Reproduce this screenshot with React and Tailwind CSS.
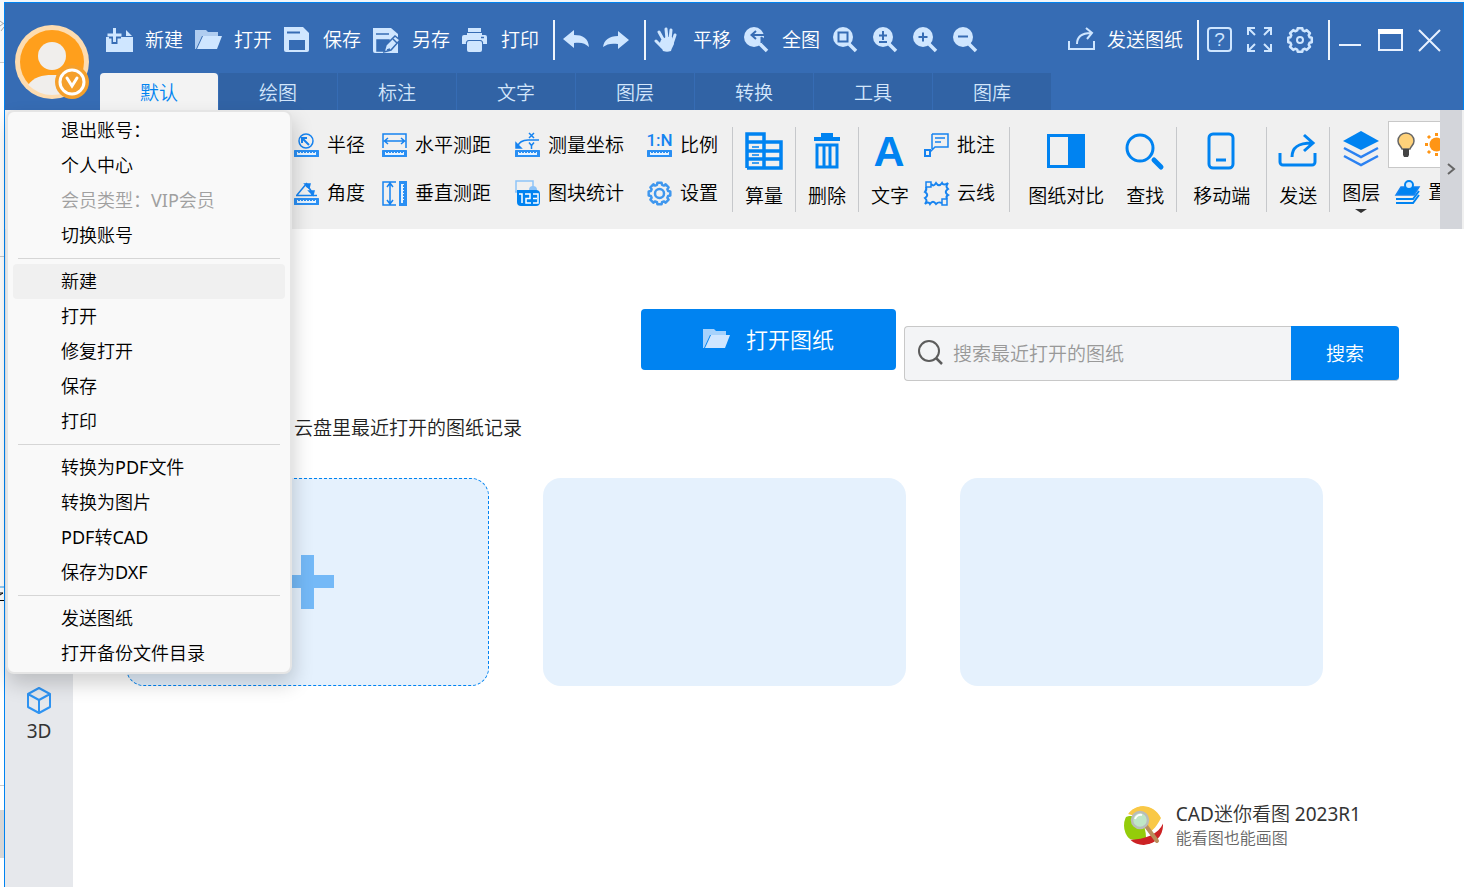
import React, { useState } from 'react';

const gearPath = (c, outer, inner, teeth) => {
  const step = (Math.PI * 2) / teeth;
  const points = [];
  for (let i = 0; i < teeth; i++) {
    const a = i * step - Math.PI / 2;
    [[-0.24, outer], [0.24, outer], [0.36, inner], [0.64, inner]].forEach(([k, r]) => {
      points.push(`${(c + r * Math.cos(a + k * step)).toFixed(2)} ${(c + r * Math.sin(a + k * step)).toFixed(2)}`);
    });
  }
  return `M${points.join('L')}Z`;
};

/* ---------- title bar icons, 27px box ---------- */

const BAR = '#366cb4';
const PALE = '#cfe6ff';

function BarIcon({ children }) {
  return (
    <svg width="27" height="27" viewBox="0 0 27 27" fill="none" className="shrink-0" aria-hidden="true">
      {children}
    </svg>
  );
}

const NewIcon = () => (
  <BarIcon>
    <path d="M0 10h27v15H0z" fill={PALE} />
    <path d="M20 3v6h6z" fill={PALE} />
    <path d="M8.500 3v14M3 8.500h12" stroke={BAR} strokeWidth="6" />
    <path d="M8.500 1v14M1.500 8h14" stroke={PALE} strokeWidth="3" />
  </BarIcon>
);

const FolderIcon = () => (
  <BarIcon>
    <path d="M0 3h11l2 2h10v4H7L1 22H0z" fill={PALE} opacity="0.8" />
    <path d="M8 9h19l-5 13H2z" fill={PALE} />
  </BarIcon>
);

const SaveIcon = () => (
  <BarIcon>
    <path d="M1 0h18l6 6v17a2 2 0 0 1-2 2H2a2 2 0 0 1-2-2V0z" fill={PALE} />
    <path d="M3 5.500h13" stroke={BAR} strokeWidth="2" />
    <path d="M5 13h16v10H5z" fill={BAR} />
  </BarIcon>
);

const SaveAsIcon = () => (
  <BarIcon>
    <path d="M2 1h16l7 6v19H2a2 2 0 0 1-2-2V1z" fill={PALE} />
    <path d="M3 7h13M4 13h12v3l-5 8H4z" fill={BAR} stroke={BAR} strokeWidth="1.500" />
    <path d="M11 25l2-7 9-9 5 4-9 10z" fill={PALE} stroke={BAR} strokeWidth="1.500" />
    <path d="M14 23l3-1M20 12l4 4" stroke={BAR} strokeWidth="1.500" />
  </BarIcon>
);

const PrintIcon = () => (
  <BarIcon>
    <path d="M6 1h13v4H6zM2 8h21a2 2 0 0 1 2 2v7h-4a3 3 0 0 0-3-4H7a3 3 0 0 0-3 4H0v-7a2 2 0 0 1 2-2z" fill={PALE} />
    <path d="M5 6h15v3H5z" fill={PALE} />
    <path d="M19 10.500h3" stroke={BAR} strokeWidth="1.500" />
    <rect x="5" y="14" width="15" height="11" rx="2" fill={PALE} />
  </BarIcon>
);

const UndoIcon = () => (
  <BarIcon>
    <path d="M0 12L11 3v5c9 0 14 3 15 12-4-4-8-5-15-4v5z" fill={PALE} />
  </BarIcon>
);

const RedoIcon = () => (
  <BarIcon>
    <path d="M26 13L15 4v5C6 9 1 13 0 20c4-3 8-4 15-3v5z" fill={PALE} />
  </BarIcon>
);

const HandIcon = () => (
  <BarIcon>
    <path d="M2 14l6 6M5 5l5 9M12 2l1 10M17 3l-1 10M21 8l-3 9" stroke={PALE} strokeWidth="3" strokeLinecap="round" />
    <path d="M7 13l5-3h6l2 5c0 4-2 5-3 9-3 1-5 1-8 0-1-3-3-4-4-6z" fill={PALE} />
  </BarIcon>
);

const Lens = ({ children }) => (
  <BarIcon>
    <circle cx="11" cy="10" r="10" fill={PALE} />
    <path d="M17 17l7 7" stroke={PALE} strokeWidth="3.500" />
    <g stroke={BAR} strokeWidth="2">{children}</g>
  </BarIcon>
);

const ZoomAllIcon = () => (
  <Lens>
    <path d="M8 8h13M13 4L8.500 8l4.500 4" />
    <path d="M18 10l4 2-4 4z" strokeWidth="1" fill={BAR} />
  </Lens>
);
const ZoomWindowIcon = () => <Lens><rect x="6.500" y="5.500" width="9" height="9" /></Lens>;
const ZoomScaleIcon = () => <Lens><path d="M11 4v9M7 8.500h8M7 15h8" /></Lens>;
const ZoomInIcon = () => <Lens><path d="M11 5.500v9M6.500 10h9" /></Lens>;
const ZoomOutIcon = () => <Lens><path d="M6 9.500h10" /></Lens>;

const ShareIcon = () => (
  <BarIcon>
    <path d="M1 14v8h25v-8" stroke={PALE} strokeWidth="2" />
    <path d="M9 17c0-7 4-11 14-11M18 1l6 5-5 6" stroke={PALE} strokeWidth="2" />
  </BarIcon>
);

const HelpIcon = () => (
  <BarIcon>
    <rect x="1" y="1" width="23" height="23" rx="3" stroke={PALE} strokeWidth="2" />
    <text x="12.500" y="19" textAnchor="middle" fontSize="19" fontWeight="400" fontFamily="Liberation Sans" fill={PALE}>?</text>
  </BarIcon>
);

const FullscreenIcon = () => (
  <BarIcon>
    <path
      d="M1 8V1h7M1 1l7 7M17 1h7v7M24 1l-7 7M1 17v7h7M1 24l7-7M17 24h7v-7M24 24l-7-7"
      stroke={PALE}
      strokeWidth="2"
    />
  </BarIcon>
);

const GearIcon = () => (
  <BarIcon>
    <path d={gearPath(13, 12, 10, 8)} stroke={PALE} strokeWidth="2.500" strokeLinejoin="round" />
    <circle cx="13" cy="13" r="3" stroke={PALE} strokeWidth="2" />
  </BarIcon>
);

const MinimizeIcon = () => <BarIcon><path d="M1 18h22" stroke="#e8f1ff" strokeWidth="2" /></BarIcon>;
const MaximizeIcon = () => (
  <BarIcon>
    <rect x="1" y="3" width="23" height="20" stroke="#e8f1ff" strokeWidth="2" />
    <path d="M0 2h25v5H0z" fill="#fff" />
  </BarIcon>
);
const CloseIcon = () => <BarIcon><path d="M1 3l21 21M22 3L1 24" stroke="#e8f1ff" strokeWidth="2" /></BarIcon>;

/* ---------- ribbon icons ---------- */

const BLUE = '#1683f0';

function SmallIcon({ children }) {
  return (
    <svg width="25" height="25" viewBox="0 0 25 25" fill="none" stroke={BLUE} strokeWidth="1.5" className="shrink-0 overflow-visible" aria-hidden="true">
      {children}
    </svg>
  );
}

const Ruler = () => (
  <g stroke="none">
    <rect y="17" width="25" height="7" rx="0.500" fill="#2a8ff3" />
    <path d="M3 22v-3h1v1h2v-1h1v1h2v-1h1v1h2v-1h1v1h2v-1h1v1h2v-1h1v1h2v-1h1v3z" fill="#e6f3ff" />
  </g>
);

const RadiusIcon = () => (
  <SmallIcon>
    <circle cx="12" cy="8" r="7" />
    <path d="M15 12L9 6M8 10V5h5" strokeWidth="2" />
    <Ruler />
  </SmallIcon>
);

const AngleIcon = () => (
  <SmallIcon>
    <path d="M2 14.500h21M3 14L13 2M12 5c4 2 6 5 6 9" />
    <path d="M11 3l5 0-1 4zM15 10l5 0-1 4z" fill={BLUE} />
    <Ruler />
  </SmallIcon>
);

const HorizontalIcon = () => (
  <SmallIcon>
    <path d="M1 15V1h23v14M2 8h21M6 5L2.500 8 6 11M19 5l3.500 3-3.500 3" />
    <Ruler />
  </SmallIcon>
);

const VerticalIcon = () => (
  <SmallIcon>
    <path d="M14 1H1v23h13M8 2v21M5 6l3-4 3 4M5 19l3 4 3-4" />
    <rect x="17" width="8" height="25" fill="#2a8ff3" stroke="none" />
    <path d="M19 3h3v1h-1v2h1v1h-1v2h1v1h-1v2h1v1h-1v2h1v1h-1v2h1v1h-1v3h-2z" fill="#e6f3ff" stroke="none" />
  </SmallIcon>
);

const CoordinateIcon = () => (
  <SmallIcon>
    <path d="M2 14c2-5 5-7 11-7h11" />
    <path d="M1 10v5h5z" fill={BLUE} />
    <path d="M14 0l5 5M19 0l-5 5M14 9.500l2.500 3 2.500-3M16.500 12v4" />
    <Ruler />
  </SmallIcon>
);

const BlockCountIcon = () => (
  <svg width="25" height="27" viewBox="0 0 25 27" fill="none" className="shrink-0" aria-hidden="true">
    <path d="M1 12V1h17v10M0 12h5" stroke="#8dc3f8" strokeWidth="1.500" />
    <circle cx="18" cy="10" r="4" fill="#8dc3f8" />
    <path d="M2 10h19a4 4 0 0 1 4 4v8a4 4 0 0 1-4 4H6a4 4 0 0 1-4-4v-5z" fill="#0083f1" />
    <path d="M4 14h3v9M10 14h5v4.500h-4v4.500h5M18 14h5v9h-5M18 18.500h4" stroke="#fff" strokeWidth="1.500" />
  </svg>
);

const ScaleIcon = () => (
  <SmallIcon>
    <text x="12.500" y="13" textAnchor="middle" fontSize="17" fontWeight="500" fontFamily="Roboto" fill={BLUE} stroke="none">1:N</text>
    <Ruler />
  </SmallIcon>
);

const SettingsIcon = () => (
  <SmallIcon>
    <path d={gearPath(12.5, 11, 9, 8)} strokeWidth="2.500" strokeLinejoin="round" stroke="#3f97ee" />
    <circle cx="12.500" cy="12.500" r="4.500" strokeWidth="2.500" stroke="#3f97ee" />
  </SmallIcon>
);

const CommentIcon = () => (
  <SmallIcon>
    <path d="M8 1h16v13H11l-5 5M8 1v15M11 5h10M11 9h6" />
    <rect x="1" y="17" width="5" height="6" strokeWidth="2" />
  </SmallIcon>
);

const CloudIcon = () => (
  <SmallIcon>
    <path
      d="M7 3c2 2 3 2 5-1 2 3 4 3 6 0 1 2 3 2 6 0-2 3-2 4 0 6-3 2-3 4 0 6-2 1-2 2-1 4M18 22c-3-1-4-1-6 1-2-3-4-3-6 0-1-2-3-2-5 0 2-3 2-4 0-6 3-2 3-4 0-6 1-1 2-2 1-5"
      strokeWidth="2"
    />
    <rect x="2" y="1" width="5" height="5" fill="#f0f0f0" />
    <rect x="18" y="18" width="5" height="6" fill="#f0f0f0" />
  </SmallIcon>
);

const StackIcon = () => (
  <SmallIcon>
    <path d="M6 7h18l-5 8H1z" fill="#0083f1" />
    <path d="M1 19h17l6-8M1 23h17l6-8" stroke="#0083f1" strokeWidth="2" />
    <circle cx="14" cy="5" r="4" fill="#d6ebff" stroke="#0083f1" strokeWidth="2" />
  </SmallIcon>
);

function LargeIcon({ children }) {
  return (
    <svg width="38" height="38" viewBox="0 0 38 38" fill="none" stroke="#0083f1" strokeWidth="3" className="shrink-0 overflow-visible" aria-hidden="true">
      {children}
    </svg>
  );
}

const QuantityIcon = () => (
  <LargeIcon>
    <path d="M2 36V2h17v34M19 10h17v26H2M2 10h17M2 19h34M2 27h34" strokeWidth="3.500" />
    <path d="M7 15h7M7 23h7M7 31h7" strokeWidth="1.500" />
  </LargeIcon>
);

const TrashIcon = () => (
  <LargeIcon>
    <path d="M13 3h12M6 7h26" strokeWidth="4" />
    <path d="M9 13h20v22H9zM16 13v22M22 13v22" />
  </LargeIcon>
);

const LetterIcon = () => (
  <LargeIcon>
    <text x="18" y="34" textAnchor="middle" fontSize="43" fontWeight="700" fontFamily="Liberation Sans" fill="#0083f1" stroke="none">A</text>
  </LargeIcon>
);

const CompareIcon = () => (
  <LargeIcon>
    <path d="M0 2h38v34H0zM3 5v28h18V5z" fill="#0083f1" fillRule="evenodd" stroke="none" />
  </LargeIcon>
);

const FindIcon = () => (
  <LargeIcon>
    <circle cx="14" cy="16" r="13" />
    <path d="M28 28l7 7" strokeWidth="5" strokeLinecap="round" />
  </LargeIcon>
);

const MobileIcon = () => (
  <LargeIcon>
    <rect x="6" y="2" width="24" height="34" rx="4" />
    <path d="M13 28h10" />
  </LargeIcon>
);

const SendIcon = () => (
  <LargeIcon>
    <path d="M1 21v9a3 3 0 0 0 3 3h29a3 3 0 0 0 3-3v-9" />
    <path d="M13 25c0-9 5-14 20-14M25 3l9 8-9 8" />
  </LargeIcon>
);

const LayersIcon = () => (
  <LargeIcon>
    <path d="M19 0l18 10-18 9L1 10z" fill="#0083f1" stroke="none" />
    <path d="M2 17l17 9 17-9M2 25l17 9 17-9" strokeWidth="2.500" stroke="#2c82f2" />
  </LargeIcon>
);

const BulbIcon = () => (
  <svg width="20" height="26" viewBox="0 0 20 26" className="shrink-0" aria-hidden="true">
    <path d="M6 17C5 14 2 13 2 9a8 8 0 0 1 16 0c0 4-3 5-4 8z" fill="#ffd27a" stroke="#666" strokeWidth="1.500" />
    <path d="M7 17h6v6l-1 2H8l-1-2z" fill="#444" />
  </svg>
);

const SunIcon = () => (
  <svg width="25" height="25" viewBox="0 0 25 25" className="shrink-0" aria-hidden="true">
    <circle cx="12.500" cy="12.500" r="7" fill="#ff9514" />
    <path
      d="M12.500 1v3M12.500 21v3M1 12.500h3M21 12.500h3M4 4l2 2M19 19l2 2M4 21l2-2M19 6l2-2"
      stroke="#ff9514"
      strokeWidth="3"
    />
  </svg>
);

/* ---------- data ---------- */

const fileActions = [
  { label: '新建', Icon: NewIcon },
  { label: '打开', Icon: FolderIcon },
  { label: '保存', Icon: SaveIcon },
  { label: '另存', Icon: SaveAsIcon },
  { label: '打印', Icon: PrintIcon }
];

const viewActions = [
  { label: '平移', Icon: HandIcon },
  { label: '全图', Icon: ZoomAllIcon }
];

const zoomActions = [
  { label: '窗口缩放', Icon: ZoomWindowIcon },
  { label: '比例缩放', Icon: ZoomScaleIcon },
  { label: '放大', Icon: ZoomInIcon },
  { label: '缩小', Icon: ZoomOutIcon }
];

const tabs = ['默认', '绘图', '标注', '文字', '图层', '转换', '工具', '图库'];

const measureColumns = [
  [{ label: '半径', Icon: RadiusIcon }, { label: '角度', Icon: AngleIcon }],
  [{ label: '水平测距', Icon: HorizontalIcon }, { label: '垂直测距', Icon: VerticalIcon }],
  [{ label: '测量坐标', Icon: CoordinateIcon }, { label: '图块统计', Icon: BlockCountIcon }],
  [{ label: '比例', Icon: ScaleIcon }, { label: '设置', Icon: SettingsIcon }]
];

const menuGroups = [
  ['退出账号：', '个人中心', '会员类型：VIP会员', '切换账号'],
  ['新建', '打开', '修复打开', '保存', '打印'],
  ['转换为PDF文件', '转换为图片', 'PDF转CAD', '保存为DXF'],
  ['发送图纸', '打开备份文件目录']
];

/* ---------- pieces ---------- */

// Latin runs need the regular weight next to the lighter Chinese glyphs
function MixedText({ text }) {
  return text.split(/([A-Z0-9 ]+)/).map((part, i) =>
    i % 2 ? <span key={i} className="font-normal">{part}</span> : part
  );
}

function BarButton({ label, Icon }) {
  return (
    <button className="flex items-center gap-3 whitespace-nowrap">
      <Icon />
      <span>{label}</span>
    </button>
  );
}

function IconButton({ label, Icon }) {
  return (
    <button aria-label={label}>
      <Icon />
    </button>
  );
}

const BarDivider = () => <span className="w-0.5 h-10 bg-[#eef4fc] shrink-0 ml-[14px] mr-2" />;

function Avatar() {
  return (
    <svg width="76" height="76" viewBox="0 0 76 76" aria-hidden="true">
      <defs>
        <clipPath id="face"><circle cx="37" cy="37" r="33" /></clipPath>
      </defs>
      <circle cx="37" cy="37" r="37" fill="#fddcb0" />
      <circle cx="37" cy="37" r="32" fill="#ff9f1c" />
      <g clipPath="url(#face)" fill="#f0eeec">
        <circle cx="37" cy="31" r="14" />
        <path d="M13 60c6-8 14-10 24-10s16 2 22 10c-6 8-14 12-22 12S19 69 13 60z" />
      </g>
      <circle cx="57" cy="57" r="17" fill="#f5a02c" />
      <circle cx="57" cy="57" r="12" fill="none" stroke="#fff" strokeWidth="3" />
      <path d="M52 53l5 8 5-8" fill="none" stroke="#fff" strokeWidth="3" strokeLinecap="round" />
    </svg>
  );
}

function TitleBar({ activeTab, onTab }) {
  return (
    <header className="flex bg-[#366cb4] border-r border-[#0083f1] text-white text-[19px]">
      <button aria-label="账号" className="w-[95px] shrink-0 pl-2.5 pt-[22px] self-start">
        <Avatar />
      </button>
      <div className="flex-1 min-w-0">
        <div className="h-[70px] pt-1 pl-1.5 pr-[18px] flex items-center">
          <div className="flex items-center gap-3">
            {fileActions.map((a) => <BarButton key={a.label} {...a} />)}
          </div>
          <BarDivider />
          <div className="flex items-center gap-[13px]">
            <IconButton label="撤销" Icon={UndoIcon} />
            <IconButton label="重做" Icon={RedoIcon} />
          </div>
          <BarDivider />
          <div className="flex items-center gap-3">
            {viewActions.map((a) => <BarButton key={a.label} {...a} />)}
            <div className="flex items-center gap-[13px]">
              {zoomActions.map((a) => <IconButton key={a.label} {...a} />)}
            </div>
          </div>
          <div className="flex items-center ml-auto">
            <BarButton label="发送图纸" Icon={ShareIcon} />
            <BarDivider />
            <div className="flex items-center gap-[13px]">
              <IconButton label="帮助" Icon={HelpIcon} />
              <IconButton label="全屏" Icon={FullscreenIcon} />
              <IconButton label="系统设置" Icon={GearIcon} />
            </div>
            <BarDivider />
            <div className="flex items-center gap-[13px]">
              <IconButton label="最小化" Icon={MinimizeIcon} />
              <IconButton label="最大化" Icon={MaximizeIcon} />
              <IconButton label="关闭" Icon={CloseIcon} />
            </div>
          </div>
        </div>
        <nav className="flex gap-px h-[37px]">
          {tabs.map((tab) => (
            <button
              key={tab}
              onClick={() => onTab(tab)}
              className={
                tab === activeTab
                  ? 'w-[118px] pt-1 rounded-t bg-[#f3f3f3] text-[#0083f1]'
                  : 'w-[118px] pt-1 bg-[#3163a5] text-[#d3e6fb]'
              }
            >
              {tab}
            </button>
          ))}
        </nav>
      </div>
    </header>
  );
}

function SmallTool({ label, Icon }) {
  return (
    <button className="flex items-center gap-2 h-12 whitespace-nowrap">
      <Icon />
      <span>{label}</span>
    </button>
  );
}

function LargeTool({ label, Icon }) {
  return (
    <button className="flex flex-col items-center gap-3 pt-[5px] h-full whitespace-nowrap">
      <Icon />
      <span className="leading-7">{label}</span>
    </button>
  );
}

const RibbonDivider = () => <span className="w-px h-[85px] bg-[#c6c8cb] shrink-0" />;

function Ribbon() {
  return (
    <section className="flex h-[119px] bg-[#f0f0f0] text-black text-[19px]">
      <div className="flex-1 min-w-0 overflow-hidden flex items-center pl-[289px]">
        <div className="flex shrink-0 pr-[14px]">
          {measureColumns.map((column, i) => (
            <div key={i} className={i === 0 ? 'pr-[17px]' : i === 3 ? '' : i === 2 ? 'pr-[23px]' : 'pr-6'}>
              {column.map((tool) => <SmallTool key={tool.label} {...tool} />)}
            </div>
          ))}
        </div>
        <RibbonDivider />
        <div className="px-3 h-[85px]"><LargeTool label="算量" Icon={QuantityIcon} /></div>
        <RibbonDivider />
        <div className="px-3 h-[85px]"><LargeTool label="删除" Icon={TrashIcon} /></div>
        <RibbonDivider />
        <div className="pl-3 pr-[15px] h-[85px]"><LargeTool label="文字" Icon={LetterIcon} /></div>
        <div className="pr-[14px] shrink-0">
          <SmallTool label="批注" Icon={CommentIcon} />
          <SmallTool label="云线" Icon={CloudIcon} />
        </div>
        <RibbonDivider />
        <div className="flex gap-[22px] pl-[18px] pr-3 h-[85px]">
          <LargeTool label="图纸对比" Icon={CompareIcon} />
          <LargeTool label="查找" Icon={FindIcon} />
        </div>
        <RibbonDivider />
        <div className="px-4 h-[85px]"><LargeTool label="移动端" Icon={MobileIcon} /></div>
        <RibbonDivider />
        <div className="px-3 h-[85px]"><LargeTool label="发送" Icon={SendIcon} /></div>
        <RibbonDivider />
        <button className="flex flex-col items-center pt-1 pl-3 pr-2 h-[85px] whitespace-nowrap">
          <LayersIcon />
          <span className="mt-2 leading-8">图层</span>
          <span className="border-x-[6px] border-t-4 border-x-transparent border-t-[#333]" />
        </button>
        <div className="shrink-0 h-[97px]">
          <div className="flex items-center gap-2 h-[47px] w-[90px] pl-[7px] bg-white border border-[#c8c8c8]">
            <BulbIcon />
            <SunIcon />
          </div>
          <div className="pl-[7px]">
            <SmallTool label="置" Icon={StackIcon} />
          </div>
        </div>
      </div>
      <button aria-label="更多" className="w-[22px] mr-0.5 shrink-0 grid place-items-center bg-[#d3d5da]">
        <svg width="10" height="14" viewBox="0 0 10 14" fill="none" stroke="#666" strokeWidth="2" aria-hidden="true">
          <path d="M2 1l6 5-6 5" />
        </svg>
      </button>
    </section>
  );
}

function AccountMenu() {
  return (
    <div
      role="menu"
      className="absolute left-px top-[107px] w-[286px] px-[5px] py-px rounded-lg border-2 border-[#e5e5e5] bg-[#f9f9f9] text-lg text-black shadow-[2px_10px_20px_rgba(0,0,0,0.18)]"
    >
      {menuGroups.map((group, i) => (
        <React.Fragment key={group[0]}>
          {i > 0 && <hr className="my-[5px] mx-[5px] border-[#d6d6d6]" />}
          {group.map((item) => (
            <button
              key={item}
              role="menuitem"
              disabled={item.startsWith('会员类型')}
              className={
                i === 1 && item === '新建'
                  ? 'block w-full h-[35px] pl-12 pb-0.5 text-left rounded bg-[#f0f0f0]'
                  : 'block w-full h-[35px] pl-12 pb-0.5 text-left rounded disabled:text-[#a0a0a0]'
              }
            >
              <MixedText text={item} />
            </button>
          ))}
        </React.Fragment>
      ))}
    </div>
  );
}

function SideBar() {
  return (
    <aside className="w-[68px] shrink-0 flex flex-col items-center bg-[#e6e8ec] pt-[457px]">
      <button className="flex flex-col items-center gap-0.5 text-[19px] text-[#333]">
        <svg width="27" height="29" viewBox="0 0 27 29" fill="none" stroke="#2e93f2" strokeWidth="2" aria-hidden="true">
          <path d="M13 2l11 6v13l-11 6-11-6V8zM2 8l11 6 11-6M13 14v13" strokeLinejoin="round" />
        </svg>
        <span className="leading-7 font-normal">3D</span>
      </button>
    </aside>
  );
}

function ProductMark() {
  return (
    <svg width="40" height="40" viewBox="0 0 40 40" aria-hidden="true">
      <defs>
        <clipPath id="disc"><circle cx="19.500" cy="19.500" r="19.500" /></clipPath>
      </defs>
      <g clipPath="url(#disc)">
        <path d="M0 0h40v40H0z" fill="#fff" />
        <path d="M4 8C12-4 30-2 37 12c-4 8-8 12-12 15-2-10-8-16-21-19z" fill="#f9c846" />
        <path d="M0 12c10-6 22 2 22 20-8 3-14 3-22-2z" fill="#94cc0a" />
        <path d="M40 14c-2 12-16 20-36 20 6 8 38 10 36-20z" fill="#cc2224" />
      </g>
      <path d="M22 20l11 15" stroke="#b98d5a" strokeWidth="4" strokeLinecap="round" />
      <circle cx="16" cy="14" r="8" fill="#bfe6c6" stroke="#b9bdb9" strokeWidth="2.500" />
      <path d="M11 13c1-3 4-5 7-4" stroke="#fff" strokeWidth="2" fill="none" />
    </svg>
  );
}

function StartPage() {
  return (
    <main className="flex-1 min-w-0 flex flex-col bg-white">
      <div className="flex justify-end items-start gap-2 pt-20 pr-[65px]">
        <button className="flex items-center justify-center gap-4 w-[255px] h-[61px] rounded bg-[#0083f1] text-white text-[22px]">
          <FolderIcon />
          打开图纸
        </button>
        <form className="flex w-[495px] h-[55px] mt-[17px]" onSubmit={(e) => e.preventDefault()}>
          <label className="flex flex-1 min-w-0 items-center gap-2 pl-[13px] rounded-l border border-r-0 border-[#c8c8c8] bg-[#f3f4f6]">
            <svg width="27" height="27" viewBox="0 0 27 27" fill="none" stroke="#5c5c5c" strokeWidth="2" className="shrink-0" aria-hidden="true">
              <circle cx="11" cy="11" r="10" />
              <path d="M18 18l6 6" strokeWidth="2.500" />
            </svg>
            <input
              aria-label="搜索"
              placeholder="搜索最近打开的图纸"
              className="flex-1 min-w-0 pt-0.5 text-[19px] outline-none placeholder:text-[#999]"
            />
          </label>
          <button className="w-[108px] pt-0.5 rounded-r border-b border-[#c8c8c8] bg-[#0083f1] text-white text-[19px]">
            搜索
          </button>
        </form>
      </div>

      <h2 className="mt-[33px] pl-[221px] text-[19px] leading-7 text-[#222]">云盘里最近打开的图纸记录</h2>

      <div className="flex gap-[54px] mt-9 pl-[53px]">
        <button
          aria-label="添加图纸"
          className="grid place-items-center w-[363px] h-52 rounded-[18px] border border-dashed border-[#0083f1] bg-[#e5f1fd]"
        >
          <svg width="54" height="54" viewBox="0 0 54 54" aria-hidden="true">
            <path d="M20 0h13v20h20v13H33v21H20V33H0V20h20z" fill="#74b9f7" />
          </svg>
        </button>
        <div className="w-[363px] h-52 rounded-[18px] bg-[#e5f1fd]" />
        <div className="w-[363px] h-52 rounded-[18px] bg-[#e5f1fd]" />
      </div>

      <footer className="flex items-center justify-end gap-3 mt-auto pr-[103px] pb-[37px]">
        <ProductMark />
        <div className="whitespace-nowrap">
          <p className="text-[19px] leading-6 text-[#333]">
            <MixedText text="CAD迷你看图 2023R1" />
          </p>
          <p className="text-base leading-6 text-[#666]">能看图也能画图</p>
        </div>
      </footer>
    </main>
  );
}

/* strip of the window lying behind */
function BackWindowEdge() {
  return (
    <div className="w-1 shrink-0 flex flex-col bg-white">
      <div className="h-[61px] bg-[#f8f8f8] border-b border-[#ccc] pt-4">
        <svg width="4" height="14" viewBox="0 0 4 14" stroke="#aaa" fill="none" aria-hidden="true">
          <path d="M0 3l4 3M0 8l4-3M1 13l3-4" />
        </svg>
      </div>
      <div className="h-[194px] border-b border-[#ccc]" />
      <div className="h-[344px] border-b border-black flex items-end">
        <svg width="4" height="14" viewBox="0 0 4 14" fill="none" aria-hidden="true">
          <path d="M0 1h4" stroke="#2a9bf0" />
          <path d="M0 7h3L0 9" stroke="#000" />
        </svg>
      </div>
      <div className="h-[185px] border-b border-[#ccc]" />
      <div className="mt-6 h-12 bg-[#d6d6d6]" />
    </div>
  );
}

export default function App() {
  const [activeTab, setActiveTab] = useState('默认');

  return (
    <div className="min-h-screen flex flex-col bg-white font-[350] overflow-hidden font-['Noto_Sans','Noto_Sans_CJK_SC',sans-serif]">
      <div className="h-0.5 shrink-0 bg-[#f3f6fa]" />
      <div className="flex flex-1">
        <BackWindowEdge />
        <div className="relative flex-1 min-w-0 flex flex-col border-l border-t border-[#0083f1]">
          <TitleBar activeTab={activeTab} onTab={setActiveTab} />
          <Ribbon />
          <div className="flex flex-1">
            <SideBar />
            <StartPage />
          </div>
          <AccountMenu />
        </div>
      </div>
    </div>
  );
}
